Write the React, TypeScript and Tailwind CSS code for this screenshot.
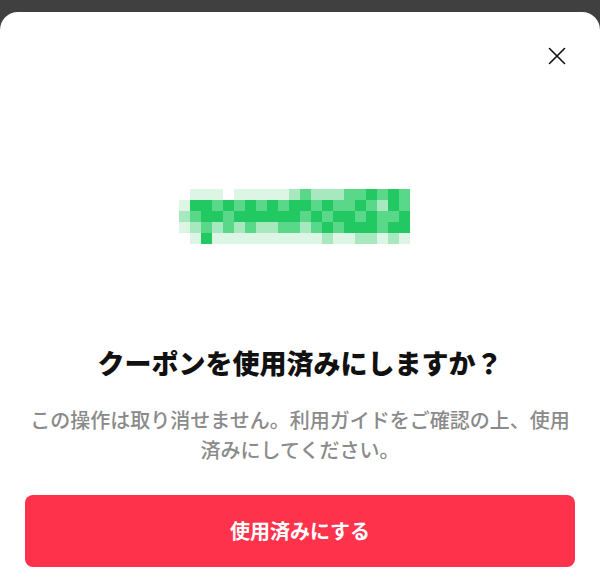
import React from 'react';

// mosaic levels per column, rows top -> bottom (0 = empty, 4 = strongest)
const mosaic: number[][] = [
  [0, 1, 2, 1, 0],
  [1, 4, 3, 2, 1],
  [1, 4, 4, 3, 4],
  [1, 3, 4, 2, 1],
  [0, 4, 3, 3, 1],
  [1, 3, 4, 2, 1],
  [1, 4, 4, 3, 1],
  [1, 3, 4, 2, 1],
  [1, 4, 4, 2, 1],
  [1, 3, 4, 3, 1],
  [2, 4, 4, 3, 1],
  [3, 4, 3, 2, 1],
  [2, 3, 4, 3, 1],
  [2, 4, 3, 4, 2],
  [2, 3, 4, 3, 1],
  [3, 3, 4, 4, 1],
  [3, 4, 3, 4, 2],
  [4, 3, 4, 4, 2],
  [3, 2, 3, 3, 1],
  [4, 4, 3, 4, 2],
  [3, 3, 4, 4, 1],
];

const levelColor = ['transparent', '#dcf5e4', '#a8e8be', '#5ad88a', '#22c862'];

const CELL = 11;

const Mosaic: React.FC = () => (
  <svg width={mosaic.length * CELL} height={5 * CELL} viewBox={`0 0 ${mosaic.length * CELL} ${5 * CELL}`}>
    {mosaic.map((col, x) =>
      col.map((lv, y) =>
        lv > 0 ? <rect key={`${x}-${y}`} x={x * CELL} y={y * CELL} width={CELL} height={CELL} fill={levelColor[lv]} /> : null
      )
    )}
  </svg>
);

const App: React.FC = () => {
  return (
    <div
      className="w-[600px] h-[580px] bg-[#404040] pt-[12px] overflow-hidden"
      style={{ fontFamily: '"Noto Sans CJK JP", "Noto Sans", sans-serif' }}
    >
      <div className="h-full bg-white rounded-t-[18px] px-[25px] flex flex-col">
        <div className="flex justify-end pt-[35px] pr-[9px]">
          <button className="w-[18px] h-[18px] text-[#111]">
            <svg width="18" height="18" viewBox="0 0 18 18" fill="none" stroke="currentColor" strokeWidth="1.6" strokeLinecap="round">
              <path d="M1.5 1.5L16.5 16.5M16.5 1.5L1.5 16.5" />
            </svg>
          </button>
        </div>

        <div className="flex justify-center mt-[124px] pr-[12px]">
          <Mosaic />
        </div>

        <h2 className="mt-[101px] text-center text-[27px] leading-[36px] font-black text-[#111]">
          クーポンを使用済みにしますか？
        </h2>

        <p className="mt-[24px] text-center text-[20px] leading-[30px] font-medium text-[#8a8a8a]">
          この操作は取り消せません。利用ガイドをご確認の上、使用済みにしてください。
        </p>

        <button className="mt-[30px] h-[72px] w-full rounded-[8px] bg-[#ff324c] text-white text-[20px] font-bold">
          使用済みにする
        </button>
      </div>
    </div>
  );
};

export default App;
